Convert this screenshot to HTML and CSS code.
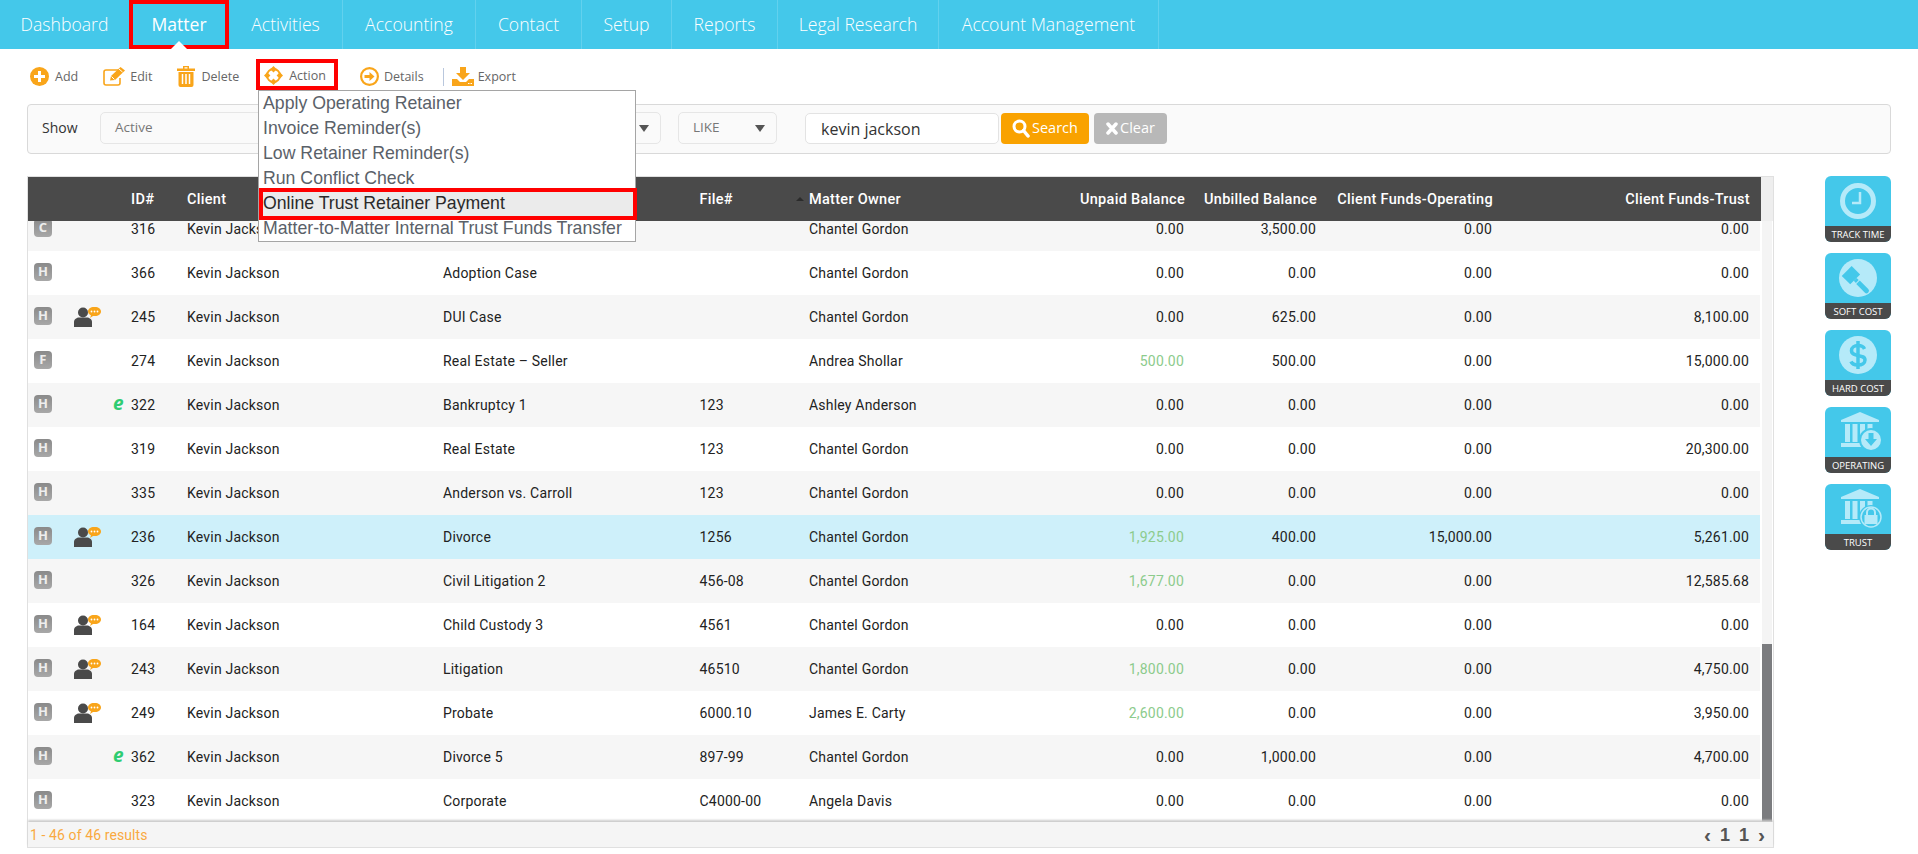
FILE: index.html
```html
<!DOCTYPE html>
<html lang="en">
<head>
<meta charset="utf-8">
<title>Matter</title>
<link rel="stylesheet" href="styles.css">
</head>
<body>
<svg class="defs" width="0" height="0">
  <symbol id="person" viewBox="0 0 27 20">
    <circle cx="9" cy="5.500" r="5" fill="#4a4a4a"/>
    <path d="M0 20v-5c0-3 3-4.500 5-4.500h8c2 0 5 1.500 5 4.500v5z" fill="#4a4a4a"/>
    <path d="M20 0h1c3.500 0 6 2 6 4.500S24.500 9 21 9h-2l-3 2 1-2.600C15 7.500 14 6 14 4.500 14 2 16.500 0 20 0z" fill="#f9a51a"/>
    <circle cx="17.500" cy="4.500" r=".9" fill="#fff"/><circle cx="20.500" cy="4.500" r=".9" fill="#fff"/><circle cx="23.500" cy="4.500" r=".9" fill="#fff"/>
  </symbol>
  <symbol id="bank" viewBox="0 0 44 40">
    <path d="M22 0l19 8v2H3V8z" fill="#b5eaf9"/>
    <path d="M7 12h5v18H7zM14.500 12h5v18h-5zM22 12h5v18h-5zM29.500 12h5v18h-5z" fill="#b5eaf9"/>
    <path d="M3 31h38v4H3z" fill="#b5eaf9"/>
  </symbol>
</svg>

<nav class="nav">
  <a class="nav-item">Dashboard</a>
  <a class="nav-item nav-active">Matter</a>
  <a class="nav-item">Activities</a>
  <a class="nav-item">Accounting</a>
  <a class="nav-item">Contact</a>
  <a class="nav-item">Setup</a>
  <a class="nav-item">Reports</a>
  <a class="nav-item">Legal Research</a>
  <a class="nav-item">Account Management</a>
</nav>

<div class="toolbar">
  <a class="tool">
    <svg width="19" height="19" viewBox="0 0 19 19"><circle cx="9.500" cy="9.500" r="9.500" fill="#f9a51a"/><path d="M8 4h3v4h4v3h-4v4H8v-4H4V8h4z" fill="#fff"/></svg>
    <span>Add</span>
  </a>
  <a class="tool tool-edit">
    <svg width="22" height="19" viewBox="0 0 22 19"><path d="M15 3H3a2 2 0 0 0-2 2v11a2 2 0 0 0 2 2h12a2 2 0 0 0 2-2v-5" fill="none" stroke="#f9a51a" stroke-width="1.600"/><path d="M7 13.500l1-4.500L17.500 0 22 3.500 12 13z" fill="#f9a51a"/><path d="M8.500 9.500l3 3M16 2l3.500 3" stroke="#fff" stroke-width="1"/></svg>
    <span>Edit</span>
  </a>
  <a class="tool">
    <svg width="18" height="21" viewBox="0 0 18 21"><path d="M6 0h6v2.500h6v2.500H0V2.500h6zM7.500 1.200v1.300h3V1.200z" fill="#f9a51a" fill-rule="evenodd"/><path d="M1.500 6h15v13a2 2 0 0 1-2 2h-11a2 2 0 0 1-2-2z" fill="#f9a51a"/><path d="M5.500 8v10M9 8v10M12.500 8v10" stroke="#fff" stroke-width="1.500"/></svg>
    <span>Delete</span>
  </a>
  <a class="tool tool-action">
    <svg width="19" height="19" viewBox="0 0 19 19"><circle cx="9.500" cy="9.500" r="6.500" fill="none" stroke="#f9a51a" stroke-width="2"/><path d="M9.500 0l3.200 3.200-3.200 3.200-3.200-3.200zM9.500 12.600l3.200 3.200-3.200 3.200-3.200-3.200zM3.200 6.300l3.200 3.200-3.200 3.200L0 9.500zM15.800 6.300l3.200 3.200-3.200 3.200-3.200-3.200z" fill="#f9a51a"/></svg>
    <span>Action</span>
  </a>
  <a class="tool tool-details">
    <svg width="19" height="19" viewBox="0 0 19 19"><circle cx="9.500" cy="9.500" r="8.400" fill="none" stroke="#f9a51a" stroke-width="2.200"/><path d="M4.500 8h5V5l5 4.500-5 4.500v-3h-5z" fill="#f9a51a"/></svg>
    <span>Details</span>
  </a>
  <span class="tool-sep"></span>
  <a class="tool tool-export">
    <svg width="22" height="19" viewBox="0 0 22 19"><path d="M8 0h6v6h4l-7 7-7-7h4z" fill="#f9a51a"/><path d="M0 12h5l3 3h6l3-3h5v7H0z" fill="#f9a51a"/><path d="M16 16.500h1.500M18.500 16.500H20" stroke="#fff" stroke-width="1"/></svg>
    <span>Export</span>
  </a>
</div>

<div class="filter">
  <span class="filter-label">Show</span>
  <div class="select select-show">
    <span>Active</span><i class="caret"></i>
  </div>
  <div class="select select-like">
    <span>LIKE</span><i class="caret"></i>
  </div>
  <div class="search-input">kevin jackson</div>
  <a class="btn btn-search">
    <svg width="18" height="19" viewBox="0 0 18 19"><circle cx="7.500" cy="7.500" r="5.500" fill="none" stroke="#fff" stroke-width="3"/><path d="M11.500 11.500l4.500 5.500" stroke="#fff" stroke-width="3.500" stroke-linecap="round"/></svg>
    <span>Search</span>
  </a>
  <a class="btn btn-clear">
    <svg width="12" height="13" viewBox="0 0 12 13"><path d="M2 2l8 9M10 2l-8 9" stroke="#fff" stroke-width="3.500" stroke-linecap="round"/></svg>
    <span>Clear</span>
  </a>
</div>

<main class="main">
  <section class="grid">
    <div class="head-wrap">
      <div class="cols head">
        <span></span><span></span><span></span>
        <span>ID#</span>
        <span>Client</span>
        <span></span>
        <span>File#</span>
        <span><i class="sort"></i>Matter Owner</span>
        <span class="r">Unpaid Balance</span>
        <span class="r">Unbilled Balance</span>
        <span class="r">Client Funds-Operating</span>
        <span class="r">Client Funds-Trust</span>
      </div>
    </div>
    <div class="body">
      <div class="viewport">
        <div class="rows">
          <div class="cols row alt"><span><b class="badge">C</b></span><span></span><span></span><span>316</span><span>Kevin Jackson</span><span></span><span></span><span>Chantel Gordon</span><span class="v">0.00</span><span class="v">3,500.00</span><span class="v">0.00</span><span class="v">0.00</span></div>
          <div class="cols row"><span><b class="badge">H</b></span><span></span><span></span><span>366</span><span>Kevin Jackson</span><span>Adoption Case</span><span></span><span>Chantel Gordon</span><span class="v">0.00</span><span class="v">0.00</span><span class="v">0.00</span><span class="v">0.00</span></div>
          <div class="cols row alt"><span><b class="badge">H</b></span><span><svg class="person" width="27" height="20"><use href="#person"/></svg></span><span></span><span>245</span><span>Kevin Jackson</span><span>DUI Case</span><span></span><span>Chantel Gordon</span><span class="v">0.00</span><span class="v">625.00</span><span class="v">0.00</span><span class="v">8,100.00</span></div>
          <div class="cols row"><span><b class="badge">F</b></span><span></span><span></span><span>274</span><span>Kevin Jackson</span><span>Real Estate – Seller</span><span></span><span>Andrea Shollar</span><span class="v paid">500.00</span><span class="v">500.00</span><span class="v">0.00</span><span class="v">15,000.00</span></div>
          <div class="cols row alt"><span><b class="badge">H</b></span><span></span><span><em class="epay">e</em></span><span>322</span><span>Kevin Jackson</span><span>Bankruptcy 1</span><span>123</span><span>Ashley Anderson</span><span class="v">0.00</span><span class="v">0.00</span><span class="v">0.00</span><span class="v">0.00</span></div>
          <div class="cols row"><span><b class="badge">H</b></span><span></span><span></span><span>319</span><span>Kevin Jackson</span><span>Real Estate</span><span>123</span><span>Chantel Gordon</span><span class="v">0.00</span><span class="v">0.00</span><span class="v">0.00</span><span class="v">20,300.00</span></div>
          <div class="cols row alt"><span><b class="badge">H</b></span><span></span><span></span><span>335</span><span>Kevin Jackson</span><span>Anderson vs. Carroll</span><span>123</span><span>Chantel Gordon</span><span class="v">0.00</span><span class="v">0.00</span><span class="v">0.00</span><span class="v">0.00</span></div>
          <div class="cols row selected"><span><b class="badge">H</b></span><span><svg class="person" width="27" height="20"><use href="#person"/></svg></span><span></span><span>236</span><span>Kevin Jackson</span><span>Divorce</span><span>1256</span><span>Chantel Gordon</span><span class="v paid">1,925.00</span><span class="v">400.00</span><span class="v">15,000.00</span><span class="v">5,261.00</span></div>
          <div class="cols row alt"><span><b class="badge">H</b></span><span></span><span></span><span>326</span><span>Kevin Jackson</span><span>Civil Litigation 2</span><span>456-08</span><span>Chantel Gordon</span><span class="v paid">1,677.00</span><span class="v">0.00</span><span class="v">0.00</span><span class="v">12,585.68</span></div>
          <div class="cols row"><span><b class="badge">H</b></span><span><svg class="person" width="27" height="20"><use href="#person"/></svg></span><span></span><span>164</span><span>Kevin Jackson</span><span>Child Custody 3</span><span>4561</span><span>Chantel Gordon</span><span class="v">0.00</span><span class="v">0.00</span><span class="v">0.00</span><span class="v">0.00</span></div>
          <div class="cols row alt"><span><b class="badge">H</b></span><span><svg class="person" width="27" height="20"><use href="#person"/></svg></span><span></span><span>243</span><span>Kevin Jackson</span><span>Litigation</span><span>46510</span><span>Chantel Gordon</span><span class="v paid">1,800.00</span><span class="v">0.00</span><span class="v">0.00</span><span class="v">4,750.00</span></div>
          <div class="cols row"><span><b class="badge">H</b></span><span><svg class="person" width="27" height="20"><use href="#person"/></svg></span><span></span><span>249</span><span>Kevin Jackson</span><span>Probate</span><span>6000.10</span><span>James E. Carty</span><span class="v paid">2,600.00</span><span class="v">0.00</span><span class="v">0.00</span><span class="v">3,950.00</span></div>
          <div class="cols row alt"><span><b class="badge">H</b></span><span></span><span><em class="epay">e</em></span><span>362</span><span>Kevin Jackson</span><span>Divorce 5</span><span>897-99</span><span>Chantel Gordon</span><span class="v">0.00</span><span class="v">1,000.00</span><span class="v">0.00</span><span class="v">4,700.00</span></div>
          <div class="cols row"><span><b class="badge">H</b></span><span></span><span></span><span>323</span><span>Kevin Jackson</span><span>Corporate</span><span>C4000-00</span><span>Angela Davis</span><span class="v">0.00</span><span class="v">0.00</span><span class="v">0.00</span><span class="v">0.00</span></div>
        </div>
      </div>
      <div class="scrollbar"><div class="thumb"></div></div>
    </div>
    <div class="foot">
      <span class="results">1 - 46 of 46 results</span>
      <span class="pager"><i>‹</i><b>1</b><b>1</b><i>›</i></span>
    </div>
  </section>

  <aside class="rail">
    <a class="rail-btn">
      <span class="rail-icon"><svg width="38" height="38" viewBox="0 0 38 38"><circle cx="19" cy="19" r="15.500" fill="none" stroke="#b5eaf9" stroke-width="5"/><path d="M21 10v11h-8" fill="none" stroke="#b5eaf9" stroke-width="2.500"/></svg></span>
      <span class="rail-label">TRACK TIME</span>
    </a>
    <a class="rail-btn">
      <span class="rail-icon"><svg width="38" height="38" viewBox="0 0 38 38"><circle cx="19" cy="19" r="19" fill="#b5eaf9"/><g transform="rotate(-45 19 19)"><path d="M9 6h14v12H9z" fill="#44c8ea"/><path d="M14 18h4v3h-4z" fill="#44c8ea"/><path d="M13.500 22h5v12a2.500 2.500 0 0 1-5 0z" fill="#44c8ea"/></g></svg></span>
      <span class="rail-label">SOFT COST</span>
    </a>
    <a class="rail-btn">
      <span class="rail-icon"><svg width="38" height="38" viewBox="0 0 38 38"><circle cx="19" cy="19" r="19" fill="#b5eaf9"/><path d="M25.500 13c-1-2.500-3.500-3.500-6.500-3.500-3.500 0-6.500 1.800-6.500 5 0 7.500 13.500 3 13.500 9.500 0 3.200-3 5-7 5-3 0-6-1-7-3.500" fill="none" stroke="#44c8ea" stroke-width="3.500"/><path d="M19 5v28" stroke="#44c8ea" stroke-width="3.500"/></svg></span>
      <span class="rail-label">HARD COST</span>
    </a>
    <a class="rail-btn">
      <span class="rail-icon rail-icon-bank"><svg width="44" height="40" viewBox="0 0 44 40"><use href="#bank"/><circle cx="33" cy="28" r="12" fill="#44c8ea"/><circle cx="33" cy="28" r="10" fill="#b5eaf9"/><path d="M30.500 21h5v6h3.500L33 34l-6-7h3.500z" fill="#44c8ea"/></svg></span>
      <span class="rail-label">OPERATING</span>
    </a>
    <a class="rail-btn">
      <span class="rail-icon rail-icon-bank"><svg width="44" height="40" viewBox="0 0 44 40"><use href="#bank"/><circle cx="33" cy="28" r="12" fill="#44c8ea"/><circle cx="33" cy="28" r="10" fill="none" stroke="#b5eaf9" stroke-width="1.500"/><path d="M26.500 26h13v9h-13z" fill="#b5eaf9"/><path d="M29 26v-2.500a4 4 0 0 1 8 0V26" fill="none" stroke="#b5eaf9" stroke-width="2"/></svg></span>
      <span class="rail-label">TRUST</span>
    </a>
  </aside>
</main>

<ul class="menu">
  <li>Apply Operating Retainer</li>
  <li>Invoice Reminder(s)</li>
  <li>Low Retainer Reminder(s)</li>
  <li>Run Conflict Check</li>
  <li class="menu-current">Online Trust Retainer Payment</li>
  <li>Matter-to-Matter Internal Trust Funds Transfer</li>
</ul>
<div class="mark mark-action"></div>
```

FILE: styles.css
```css
* { box-sizing: border-box; }
html, body { margin: 0; padding: 0; }
body {
  position: relative;
  width: 1918px;
  height: 854px;
  overflow: hidden;
  background: #fff;
  font-family: Roboto, "Liberation Sans", sans-serif;
}
.defs { position: absolute; }

/* top navigation */
.nav { display: flex; height: 49px; background: #44c8ea; }
.nav-item {
  position: relative;
  display: flex;
  align-items: center;
  justify-content: center;
  border-right: 1px solid #62d1ee;
  color: #fff;
  font: 300 17.600px/1 "Open Sans", sans-serif;
}
.nav-item:nth-child(1) { width: 129px; border-right: 0; }
.nav-item:nth-child(2) { width: 100px; }
.nav-item:nth-child(3) { width: 114px; }
.nav-item:nth-child(4) { width: 133px; }
.nav-item:nth-child(5) { width: 106px; }
.nav-item:nth-child(6) { width: 90px; }
.nav-item:nth-child(7) { width: 106px; }
.nav-item:nth-child(8) { width: 161px; }
.nav-item:nth-child(9) { width: 220px; }
.nav-active {
  font-weight: 400;
  border-right: 0;
  box-shadow: inset 0 0 0 4px #f00;
}
.nav-active::after {
  content: "";
  position: absolute;
  left: 42px;
  bottom: 0;
  border: 8px solid transparent;
  border-top: 0;
  border-bottom-color: #fff;
}

/* tool bar */
.toolbar {
  display: flex;
  align-items: center;
  height: 55px;
  padding: 0 0 0 30px;
  gap: 24px;
}
.tool {
  display: flex;
  align-items: center;
  gap: 6px;
  color: #666;
  font: 400 12.500px/1 "Open Sans", sans-serif;
}
.tool span { padding-top: 2px; }
.tool svg { flex: none; }
.tool:nth-child(n+2):not(.tool-details):not(.tool-export) { margin-left: 1px; }
.tool-edit { gap: 5px; }
.tool-action { margin-top: -3px; }
.tool-details { margin-left: 10px; gap: 5px; }
.tool-sep { width: 1px; height: 18px; margin: 0 -15px 0 -5px; background: #b9c7dd; }
.tool-export { gap: 4px; margin-left: -1px; }

/* filter panel */
.filter {
  display: flex;
  align-items: center;
  width: 1864px;
  height: 50px;
  margin: 0 0 22px 27px;
  padding: 0 0 2px 14px;
  background: #fafafa;
  border: 1px solid #d9d9d9;
  border-radius: 4px;
  color: #333;
}
.filter-label { width: 58px; font: 400 14px/1 "Open Sans", sans-serif; }
.select {
  display: flex;
  align-items: center;
  justify-content: space-between;
  height: 32px;
  padding: 0 11px 0 14px;
  background: #fafafa;
  border: 1px solid #e6e6e6;
  border-radius: 5px;
  color: #777;
  font: 400 13.500px/1 "Open Sans", sans-serif;
}
.select-show { width: 561px; margin-right: 17px; }
.select-like { width: 99px; margin-right: 28px; }
.caret { border: 5px solid transparent; border-top: 7px solid #555; border-bottom: 0; }
.search-input {
  display: flex;
  align-items: center;
  width: 194px;
  height: 31px;
  margin-top: 1px;
  padding-left: 15px;
  background: #fff;
  border: 1px solid #e3e3e3;
  border-radius: 5px;
  color: #333;
  font: 400 16px/1 "Open Sans", sans-serif;
}
.btn {
  display: flex;
  align-items: center;
  justify-content: center;
  height: 31px;
  gap: 2px;
  border-radius: 4px;
  color: #fff;
  font: 400 14.500px/1 "Open Sans", sans-serif;
}
.btn-search { width: 88px; margin-left: 2px; background: #f9a200; }
.btn-clear { width: 73px; margin-left: 5px; background: #b8b8b8; }

/* grid + side rail */
.main { display: flex; align-items: flex-start; padding-left: 27px; }
.grid {
  display: flex;
  flex-direction: column;
  width: 1747px;
  height: 672px;
  border: 1px solid #e0e0e0;
  color: #222;
  font-size: 14px;
}
.head-wrap { height: 44px; background: #eee; }
.cols {
  display: grid;
  grid-template-columns: 46px 34px 23px 56px 256px 256.500px 109.500px 242px 134px 132px 176px 257px;
  align-items: center;
}
.head {
  width: 1733px;
  height: 44px;
  background: #4a4a4a;
  color: #fff;
  font-weight: 500;
  font-size: 14.500px;
  letter-spacing: .3px;
}
.r { text-align: right; }
.v { text-align: right; padding-right: 1px; letter-spacing: .2px; }
.sort {
  display: inline-block;
  margin: 0 5px 2px -13px;
  border: 4px solid transparent;
  border-top: 0;
  border-bottom: 4px solid #2b2b2b;
  vertical-align: middle;
}
.body { display: flex; flex: 1; min-height: 0; }
.viewport { width: 1732px; overflow: hidden; }
.rows { margin-top: -14px; }
.row { height: 44px; letter-spacing: .2px; background: #fff; }
.alt { background: #f6f6f6; }
.selected { background: #cef0fa; }
.paid { color: #8ccb8c; }
.badge {
  display: flex;
  align-items: center;
  justify-content: center;
  width: 18px;
  height: 18px;
  margin: -3px 0 0 6px;
  border-radius: 4px;
  background: linear-gradient(#8a8a8a, #a8a8a8);
  color: #eee;
  font: 700 13px/1 "Open Sans", sans-serif;
}
.person { display: block; margin: -1px 0 0 0; }
.epay {
  display: block;
  margin: -4px 0 0 5px;
  color: #2fcc71;
  font: italic 700 19px/1 "Open Sans", sans-serif;
}
.scrollbar {
  display: flex;
  flex-direction: column;
  justify-content: flex-end;
  width: 10px;
  margin-left: 2px;
  background: #f4f4f4;
}
.thumb { height: 178px; background: #7b7c7f; }
.foot {
  display: flex;
  align-items: center;
  justify-content: space-between;
  height: 25px;
  padding: 0 8px 0 2px;
  background: #f5f5f5;
  box-shadow: 0 -2px 2px #ccc;
  position: relative;
}
.results { color: #f9a93f; font-size: 14px; letter-spacing: .1px; }
.pager { display: flex; align-items: center; gap: 9px; color: #555; font: 700 18px/1 "Liberation Sans", sans-serif; }
.pager i { font-style: normal; font-size: 21px; line-height: 18px; }

.rail { display: flex; flex-direction: column; gap: 11px; margin-left: 51px; }
.rail-btn {
  display: flex;
  flex-direction: column;
  width: 66px;
  height: 66px;
  overflow: hidden;
  border-radius: 6px;
  background: #44c8ea;
}
.rail-icon { display: flex; align-items: center; justify-content: center; height: 50px; }
.rail-icon-bank { padding-left: 3px; }
.rail-label {
  height: 16px;
  background: #4a4a4a;
  color: #fff;
  text-align: center;
  font: 400 9.500px/17px "Open Sans", sans-serif;
}

/* overlays: open drop-down and the red call-out frames */
.menu {
  position: absolute;
  left: 258px;
  top: 90px;
  width: 378px;
  height: 152px;
  margin: 0;
  padding: 0;
  list-style: none;
  background: #fff;
  border: 1px solid #a5a5a5;
  color: #5a6169;
  font: 400 17.700px/25px "Liberation Sans", sans-serif;
}
.menu li { height: 25px; padding-left: 4px; white-space: nowrap; }
.menu-current {
  position: relative;
  background: #ebebeb;
  color: #2a2a2a;
}
.menu-current::after {
  content: "";
  position: absolute;
  left: 0;
  right: -2px;
  top: -3px;
  bottom: -4px;
  border: 4px solid #f00;
}
.mark { position: absolute; border: 4px solid #f00; }
.mark-action { left: 256px; top: 59px; width: 82px; height: 31px; }
```
